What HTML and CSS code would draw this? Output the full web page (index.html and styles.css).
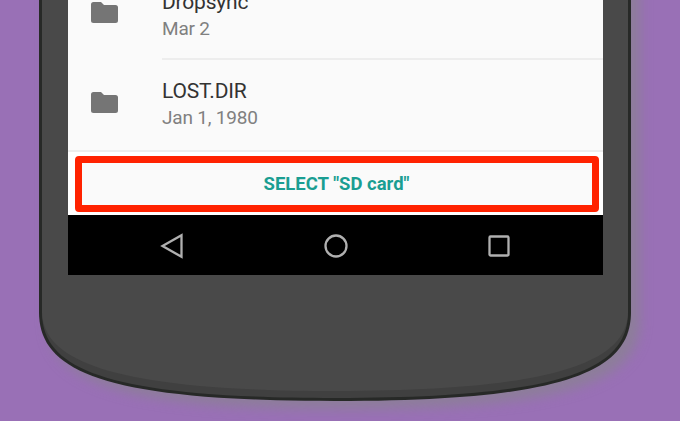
FILE: index.html
```html
<!DOCTYPE html>
<html lang="en">
<head>
<meta charset="utf-8">
<title>Select SD card</title>
<link rel="stylesheet" href="styles.css">
</head>
<body>
<main class="stage">
  <svg class="phone" viewBox="0 0 680 421" aria-hidden="true">
    <path class="phone-rim" d="M39-20V312C39 370 100 401 335 401S631 370 631 312V-20Z"/>
    <path class="phone-edge" d="M42-20V312C42 368 102 398 335 398S628 368 628 312V-20Z"/>
    <path class="phone-face" d="M42-20V312C43 359 106 391 335 391S627 359 628 312V-20Z"/>
  </svg>
  <section class="screen">
    <div class="list">
      <div class="row row-first">
        <svg class="folder" viewBox="0 0 27 21"><path d="M2.5 0H10L13 3H24.500Q27 3 27 5.500V18.500Q27 21 24.500 21H2.500Q0 21 0 18.500V2.500Q0 0 2.500 0Z"/></svg>
        <div class="details"><div class="name">Dropsync</div><div class="date">Mar 2</div></div>
      </div>
      <div class="row">
        <svg class="folder" viewBox="0 0 27 21"><path d="M2.5 0H10L13 3H24.500Q27 3 27 5.500V18.500Q27 21 24.500 21H2.500Q0 21 0 18.500V2.500Q0 0 2.500 0Z"/></svg>
        <div class="details"><div class="name name-caps">LOST.DIR</div><div class="date">Jan 1, 1980</div></div>
      </div>
    </div>
    <div class="action"><button class="select">SELECT "SD card"</button></div>
    <nav class="navbar">
      <svg class="nav-icon" viewBox="0 0 26 28"><path d="M22.500 3.200V24.800L3.500 14Z"/></svg>
      <svg class="nav-icon" viewBox="0 0 26 28"><circle cx="13" cy="14" r="10.500"/></svg>
      <svg class="nav-icon" viewBox="0 0 26 28"><rect x="3.500" y="4.500" width="19" height="19" rx="1"/></svg>
    </nav>
  </section>
</main>
</body>
</html>
```

FILE: styles.css
```css
* { box-sizing: border-box; }
body { margin: 0; font-family: Roboto, "Liberation Sans", sans-serif; }
.stage {
  position: relative;
  width: 680px;
  height: 421px;
  overflow: hidden;
  padding-left: 68px;
  background: #9970b6;
}
.phone { position: absolute; inset: 0; width: 680px; height: 421px; }
.phone-rim { fill: #272927; filter: drop-shadow(9px 8px 6px rgba(132, 136, 132, .55)); }
.phone-edge { fill: #404040; }
.phone-face { fill: #494949; }
.screen { position: relative; width: 535px; height: 275px; background: #fafafa; }
.list { height: 152px; overflow: hidden; border-bottom: 2px solid #ededed; }
.row { display: flex; align-items: flex-start; height: 91px; }
.row-first { height: 60px; }
.row-first .folder { margin-top: 2px; }
.row-first .details { margin-top: -11px; height: 71px; border-bottom: 2px solid #ededed; }
.folder { flex: none; width: 27px; height: 21px; margin: 32px 44px 0 23px; fill: #757575; }
.details { flex: 1; margin-top: 18px; white-space: nowrap; }
.name { height: 27px; font-size: 21px; line-height: 26px; color: #333; letter-spacing: -.2px; }
.name-caps { letter-spacing: -.15px; }
.date { height: 26px; font-size: 19px; line-height: 26px; color: #808080; letter-spacing: -.2px; }
.action { height: 63px; padding: 4px 4px 3px 7px; background: #fff; }
.select {
  display: block;
  width: 524px;
  height: 56px;
  padding: 1px 1px 0 0;
  border: 7px solid #ff2200;
  border-radius: 4px;
  background: #fafafa;
  color: #1a9e92;
  font: 700 18.5px/41px Roboto, "Liberation Sans", sans-serif;
}
.navbar {
  display: flex;
  justify-content: space-between;
  align-items: center;
  height: 60px;
  padding: 2px 91px 0;
  background: #000;
}
.nav-icon { width: 26px; height: 28px; fill: none; stroke: #b0b0b0; stroke-width: 2.3; }
```
